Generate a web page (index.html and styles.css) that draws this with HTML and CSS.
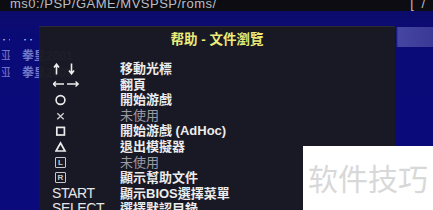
FILE: index.html
```html
<!DOCTYPE html>
<html>
<head>
<meta charset="utf-8">
<link rel="stylesheet" href="styles.css">
</head>
<body>
<div class="screen">
  <div class="topbar">
    <span class="path">ms0:/PSP/GAME/MVSPSP/roms/</span>
    <span class="pager">[ /</span>
  </div>
  <div class="list">
    <div class="row row-head"><span class="mark">‥</span><span class="name">‥</span></div>
    <div class="row"><span class="mark">亚</span><span class="name">拳皇2001</span></div>
    <div class="row"><span class="mark">亚</span><span class="name">拳皇2002</span></div>
  </div>

  <div class="help">
    <div class="help-title">帮助 - 文件瀏覽</div>
    <div class="help-grid">
      <span class="key">
        <svg class="ico-wide" viewBox="0 0 26 12"><path d="M3.5 1.5 V11.5 M1 4.5 L3.5 1.2 L6 4.5 M18.5 0.5 V10.5 M16 7.5 L18.5 10.8 L21 7.5" fill="none" stroke="#ececec" stroke-width="1.6"/></svg>
      </span><span class="desc">移動光標</span>
      <span class="key">
        <svg class="ico-wide" viewBox="0 0 26 12"><path d="M0 6 H11 M3 3.5 L0.3 6 L3 8.5 M14 6 H25.5 M22.5 3.5 L25.2 6 L22.5 8.5" fill="none" stroke="#ececec" stroke-width="1.4"/></svg>
      </span><span class="desc">翻頁</span>
      <span class="key">
        <svg class="ico" viewBox="0 0 12 12"><circle cx="5.5" cy="6" r="4.4" fill="none" stroke="#ececec" stroke-width="1.6"/></svg>
      </span><span class="desc">開始游戲</span>
      <span class="key">
        <svg class="ico" viewBox="0 0 12 12"><path d="M2.3 3.3 L8.7 9.3 M8.7 3.3 L2.3 9.3" stroke="#d8d8d8" stroke-width="1.2"/></svg>
      </span><span class="desc dim">未使用</span>
      <span class="key">
        <svg class="ico" viewBox="0 0 12 12"><rect x="1.8" y="2.4" width="7.6" height="7.6" fill="none" stroke="#ececec" stroke-width="1.7"/></svg>
      </span><span class="desc">開始游戲 (AdHoc)</span>
      <span class="key">
        <svg class="ico" viewBox="0 0 12 12"><path d="M5.5 2 L10 10 L1 10 Z" fill="none" stroke="#ececec" stroke-width="1.7"/></svg>
      </span><span class="desc">退出模擬器</span>
      <span class="key"><span class="boxed">L</span></span><span class="desc dim">未使用</span>
      <span class="key"><span class="boxed">R</span></span><span class="desc">顯示幫助文件</span>
      <span class="key word">START</span><span class="desc">顯示BIOS選擇菜單</span>
      <span class="key word">SELECT</span><span class="desc">選擇默認目錄</span>
    </div>
  </div>

  <div class="watermark">软件技巧</div>
</div>
</body>
</html>
```

FILE: styles.css
```css
html, body {
  margin: 0;
  padding: 0;
}
body {
  width: 433px;
  height: 210px;
  overflow: hidden;
  background: #09096e;
  font-family: "Liberation Sans", "Noto Sans CJK TC", "Noto Sans CJK SC", sans-serif;
}
.screen {
  position: relative;
  width: 433px;
  height: 210px;
  overflow: hidden;
  background: #0a0a74;
}
.topbar {
  height: 11px;
  background: #0c0c12;
  display: flex;
  justify-content: space-between;
  color: #bdbdc4;
  font-size: 13px;
  line-height: 7px;
  overflow: hidden;
}
.path {
  padding-left: 10px;
  letter-spacing: 0.5px;
}
.pager {
  padding-right: 6px;
  letter-spacing: 2px;
}
.list {
  display: flex;
  flex-direction: column;
  padding-top: 16px;
  background: linear-gradient(#0c0c6c 0, #0a0a78 30px, #0a0a7c 100%);
  height: 199px;
  box-sizing: border-box;
}
.row {
  height: 17px;
  display: flex;
  align-items: center;
  gap: 8px;
  font-size: 12px;
  line-height: 12px;
  color: #6b72c6;
  white-space: nowrap;
}
.row-head {
  height: 20px;
  align-items: flex-end;
  color: #c8cbe8;
  background: linear-gradient(to right, transparent 0, transparent 396px, #4545a2 398px, #3a3a96 100%);
}
.row .mark {
  width: 9px;
  padding-left: 1px;
  overflow: hidden;
}
.row .name {
  padding-left: 4px;
  color: #7078c8;
  font-weight: bold;
}
.row-head .name {
  color: #c8cbe8;
  font-weight: normal;
}

.help {
  position: absolute;
  left: 39px;
  top: 26px;
  width: 356px;
  height: 200px;
  background: rgba(26, 26, 33, 0.96);
  box-shadow: inset 0 1px 0 #2a2a34;
  padding: 6px 0 0 16px;
  box-sizing: border-box;
}
.help-title {
  text-align: center;
  padding-right: 16px;
  color: #ecec78;
  font-size: 13.5px;
  line-height: 16px;
  font-weight: bold;
}
.help-grid {
  margin-top: 13px;
  display: grid;
  grid-template-columns: 65px 1fr;
  grid-auto-rows: 15.6px;
  align-items: center;
  color: #ececec;
  font-size: 13px;
}
.desc {
  font-weight: bold;
  line-height: 15.6px;
  white-space: nowrap;
}
.desc.dim {
  color: #9a9aa2;
  font-weight: normal;
}
.key {
  display: flex;
  align-items: center;
  line-height: 15.6px;
  color: #ececec;
}
.ico {
  width: 12px;
  height: 12px;
}
.ico-wide {
  width: 26px;
  height: 12px;
  margin-left: -2px;
}
.boxed {
  display: inline-block;
  width: 9px;
  height: 9px;
  border: 1px solid #c8c8c8;
  border-radius: 1px;
  font-size: 8px;
  line-height: 9px;
  text-align: center;
  color: #c8c8c8;
  font-weight: bold;
}
.word {
  font-size: 14px;
  letter-spacing: -0.4px;
  color: #e6e6e6;
  margin-left: -3px;
}

.watermark {
  position: absolute;
  left: 303px;
  top: 146px;
  width: 130px;
  height: 64px;
  background: #ffffff;
  color: #d8d8d8;
  font-family: "Noto Sans CJK SC", sans-serif;
  font-size: 30px;
  line-height: 30px;
  padding: 16px 0 0 5px;
  box-sizing: border-box;
  white-space: nowrap;
}
```
